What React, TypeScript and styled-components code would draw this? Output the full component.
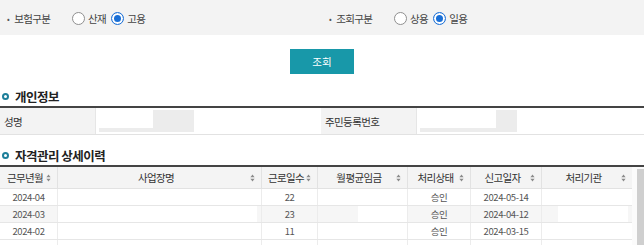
import React from "react";
import styled, { createGlobalStyle } from "styled-components";

const GlobalStyle = createGlobalStyle`
  body {
    margin: 0;
    background: #fff;
    font-family: "Noto Sans CJK KR", "Noto Sans", sans-serif;
    color: #333;
  }
`;

const COLS = "58px 204px 56px 90px 63px 71px 90px";

const rows = [
  { ym: "2024-04", days: "22", status: "승인", date: "2024-05-14" },
  { ym: "2024-03", days: "23", status: "승인", date: "2024-04-12" },
  { ym: "2024-02", days: "11", status: "승인", date: "2024-03-15" },
  { ym: "", days: "", status: "", date: "" },
];

const headers = ["근무년월", "사업장명", "근로일수", "월평균임금", "처리상태", "신고일자", "처리기관"];

const SortIcon = () => (
  <svg width="5" height="8" viewBox="0 0 5 8">
    <path d="M2.5 0.5 L4.6 3.2 H0.4 Z" fill="#8a8a8a" />
    <path d="M2.5 7.5 L4.6 4.8 H0.4 Z" fill="#8a8a8a" />
  </svg>
);

const Radio = ({ checked, label }: { checked?: boolean; label: string }) => (
  <RadioWrap>
    <RadioCircle $checked={checked} />
    <RadioText>{label}</RadioText>
  </RadioWrap>
);

const App = () => {
  return (
    <Page>
      <GlobalStyle />
      <SearchPanel>
        <Field>
          <FieldLabel>
            <Bullet>•</Bullet>보험구분
          </FieldLabel>
          <Radio label="산재" />
          <Radio label="고용" checked />
        </Field>
        <Field>
          <FieldLabel>
            <Bullet>•</Bullet>조회구분
          </FieldLabel>
          <Radio label="상용" />
          <Radio label="일용" checked />
        </Field>
      </SearchPanel>

      <ButtonRow>
        <SearchButton>조회</SearchButton>
      </ButtonRow>

      <SectionTitle>
        <TitleDot />
        개인정보
      </SectionTitle>
      <InfoTable>
        <InfoLabel>성명</InfoLabel>
        <InfoValue>
          <InputBox $width={95} $fill={54} />
        </InfoValue>
        <InfoLabel>주민등록번호</InfoLabel>
        <InfoValue>
          <InputBox $width={97} $fill={76} />
        </InfoValue>
      </InfoTable>

      <SectionTitle $top={11}>
        <TitleDot />
        자격관리 상세이력
      </SectionTitle>
      <GridWrap>
        <Grid>
          <HeadRow>
            {headers.map((h) => (
              <HeadCell key={h}>
                <HeadText>{h}</HeadText>
                <SortIcon />
              </HeadCell>
            ))}
          </HeadRow>
          {rows.map((r, i) => {
            const striped = i === 1;
            return (
              <DataRow key={i}>
                <DataCell $striped={striped}>{r.ym}</DataCell>
                <DataCell $striped={striped} $maskFrom={0} $maskTo={199} />
                <DataCell $striped={striped}>{r.days}</DataCell>
                <DataCell $striped={striped} $maskFrom={40} $maskTo={90} />
                <DataCell $striped={striped}>{r.status}</DataCell>
                <DataCell $striped={striped}>{r.date}</DataCell>
                <DataCell $striped={striped} $maskFrom={16} $maskTo={86} />
              </DataRow>
            );
          })}
        </Grid>
        <ScrollTrack>
          <ScrollThumb />
        </ScrollTrack>
      </GridWrap>
    </Page>
  );
};

export default App;

const Page = styled.div`
  width: 644px;
  height: 245px;
  overflow: hidden;
`;

const SearchPanel = styled.div`
  display: grid;
  grid-template-columns: 322px 322px;
  height: 35px;
  background: #f3f3f3;
`;

const Field = styled.div`
  display: flex;
  align-items: center;
  padding-left: 7px;
  padding-top: 1px;
`;

const FieldLabel = styled.span`
  display: flex;
  align-items: center;
  width: 65px;
  font-size: 10.5px;
  letter-spacing: -0.6px;
  color: #444;
`;

const Bullet = styled.span`
  font-size: 8px;
  margin-right: 5px;
  color: #555;
`;

const RadioWrap = styled.label`
  display: flex;
  align-items: center;
  margin-right: 5px;
`;

const RadioCircle = styled.span<{ $checked?: boolean }>`
  box-sizing: border-box;
  width: 13px;
  height: 13px;
  border-radius: 50%;
  background: #fff;
  border: 1px solid ${(p) => (p.$checked ? "#1a6fd6" : "#8f8f8f")};
  box-shadow: ${(p) => (p.$checked ? "inset 0 0 0 2px #fff, inset 0 0 0 6px #1a6fd6" : "none")};
`;

const RadioText = styled.span`
  margin-left: 3px;
  font-size: 10.5px;
  letter-spacing: -0.6px;
  color: #444;
`;

const ButtonRow = styled.div`
  display: flex;
  justify-content: center;
  padding-top: 14px;
`;

const SearchButton = styled.button`
  width: 64px;
  height: 25px;
  border: none;
  background: #1898a9;
  color: #fff;
  font-family: inherit;
  font-size: 10.5px;
  padding: 0;
`;

const SectionTitle = styled.div<{ $top?: number }>`
  display: flex;
  align-items: center;
  height: 19px;
  margin-top: ${(p) => p.$top ?? 13}px;
  font-size: 12.5px;
  font-weight: 700;
  color: #222;
  letter-spacing: -0.5px;
`;

const TitleDot = styled.span`
  box-sizing: border-box;
  width: 7px;
  height: 7px;
  margin: 0 6px 0 2px;
  border-radius: 50%;
  border: 2px solid #1d7f9a;
`;

const InfoTable = styled.div`
  display: grid;
  grid-template-columns: 96px 225px 96px 1fr;
  height: 26px;
  border-top: 2px solid #444;
  border-bottom: 1px solid #e2e2e2;
`;

const InfoLabel = styled.div`
  display: flex;
  align-items: center;
  padding-left: 4px;
  background: #f3f3f3;
  border-right: 1px solid #e6e6e6;
  font-size: 10.5px;
  letter-spacing: -0.6px;
  color: #333;
`;

const InfoValue = styled.div`
  display: flex;
  align-items: center;
  padding-left: 3px;
`;

const InputBox = styled.div<{ $width: number; $fill: number }>`
  width: ${(p) => p.$width}px;
  height: 22px;
  background: linear-gradient(#fff, #fff) no-repeat left top / ${(p) => p.$fill}px 18px, #ececec;
`;

const GridWrap = styled.div`
  display: flex;
  border-top: 2px solid #444;
`;

const Grid = styled.div`
  width: 632px;
`;

const HeadRow = styled.div`
  display: grid;
  grid-template-columns: ${COLS};
  height: 21px;
  background: #f4f4f4;
  border-bottom: 1px solid #e2e2e2;
`;

const HeadCell = styled.div`
  display: flex;
  align-items: center;
  padding: 0 6px 0 4px;
  border-right: 1px solid #e2e2e2;
  &:last-child {
    border-right: none;
  }
`;

const HeadText = styled.span`
  flex: 1;
  text-align: center;
  font-size: 10.5px;
  letter-spacing: -0.6px;
  color: #333;
`;

const DataRow = styled.div`
  display: grid;
  grid-template-columns: ${COLS};
  height: 16px;
  border-bottom: 1px solid #e6e6e6;
`;

const DataCell = styled.div<{ $striped?: boolean; $maskFrom?: number; $maskTo?: number }>`
  display: flex;
  align-items: center;
  justify-content: center;
  font-size: 9.5px;
  letter-spacing: -0.4px;
  color: #555;
  border-right: 1px solid #ececec;
  background: ${(p) => {
    const base = p.$striped ? "#f6f6f6" : "#fff";
    if (p.$maskFrom === undefined) return base;
    return `linear-gradient(to right, ${base} ${p.$maskFrom}px, #fff ${p.$maskFrom}px, #fff ${p.$maskTo}px, ${base} ${p.$maskTo}px)`;
  }};
  &:last-child {
    border-right: none;
  }
`;

const ScrollTrack = styled.div`
  flex: 1;
  display: flex;
  justify-content: flex-end;
  background: #fbfbfb;
`;

const ScrollThumb = styled.div`
  width: 7px;
  height: 100px;
  margin-top: 2px;
  background: #cfcfcf;
`;
